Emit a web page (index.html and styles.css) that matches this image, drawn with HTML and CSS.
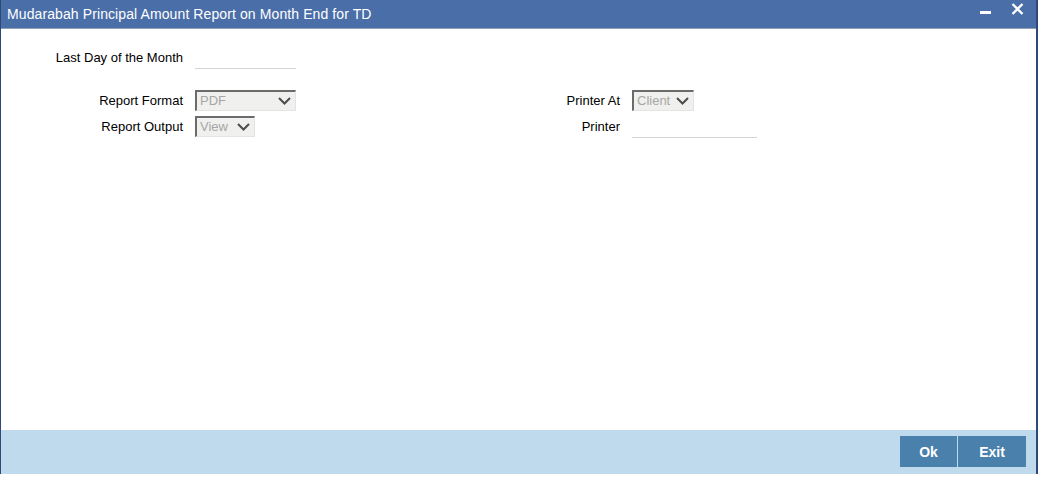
FILE: index.html
```html
<!DOCTYPE html>
<html>
<head>
<meta charset="utf-8">
<link rel="stylesheet" href="styles.css">
</head>
<body>
<div class="window">
  <div class="titlebar">
    <span class="title">Mudarabah Principal Amount Report on Month End for TD</span>
    <div class="controls">
      <svg class="min" width="11" height="4" viewBox="0 0 11 4"><rect x="0" y="0" width="11" height="3" fill="#fff"/></svg>
      <svg class="close" width="13" height="12" viewBox="0 0 13 12"><path d="M1.5 1 L11.5 11 M11.5 1 L1.5 11" stroke="#fff" stroke-width="2.4" fill="none"/></svg>
    </div>
  </div>
  <div class="body">
    <div class="row-single">
      <label class="lbl up">Last Day of the Month</label>
      <div class="line-input w101"></div>
    </div>
    <div class="grid">
      <label class="lbl">Report Format</label>
      <div class="select w101"><span>PDF</span><svg width="13" height="8" viewBox="0 0 13 8"><path d="M1 1 L6.5 6.5 L12 1" stroke="#4d4d4d" stroke-width="2" fill="none"/></svg></div>
      <label class="lbl">Printer At</label>
      <div class="select w62"><span>Client</span><svg width="13" height="8" viewBox="0 0 13 8"><path d="M1 1 L6.5 6.5 L12 1" stroke="#4d4d4d" stroke-width="2" fill="none"/></svg></div>
      <label class="lbl">Report Output</label>
      <div class="select w60"><span>View</span><svg width="13" height="8" viewBox="0 0 13 8"><path d="M1 1 L6.5 6.5 L12 1" stroke="#4d4d4d" stroke-width="2" fill="none"/></svg></div>
      <label class="lbl">Printer</label>
      <div class="line-input w125"></div>
    </div>
  </div>
  <div class="footer">
    <button class="btn ok">Ok</button>
    <button class="btn exit">Exit</button>
  </div>
</div>
</body>
</html>
```
FILE: styles.css
```css
* { box-sizing: border-box; }
html, body { margin: 0; padding: 0; background: #fff; }
body { font-family: "Liberation Sans", Arial, sans-serif; font-size: 13px; color: #000; }

.window {
  width: 1038px;
  height: 474px;
  display: flex;
  flex-direction: column;
  border-left: 1px solid #2c4a78;
  border-right: 2px solid #2c4a78;
}

.titlebar {
  height: 29px;
  flex: none;
  background: #4a6ea8;
  border-bottom: 1px solid #8fa0b4;
  display: flex;
  align-items: center;
  justify-content: space-between;
  padding: 0 12px 0 6px;
}
.title { color: #fff; font-size: 14px; letter-spacing: 0.1px; margin-top: -1px; }
.controls { display: flex; align-items: flex-start; gap: 20px; height: 100%; }
.controls .min { margin-top: 11px; }
.controls .close { margin-top: 3px; }

.body { flex: 1; padding-top: 18px; }

.row-single {
  display: grid;
  grid-template-columns: 182px 101px;
  column-gap: 12px;
  align-items: center;
  height: 22px;
}

.lbl { text-align: right; white-space: nowrap; }
.lbl.up { margin-top: -2px; }

.line-input { height: 22px; border-bottom: 1px solid #d4d4d4; }
.w101 { width: 101px; }
.w125 { width: 125px; }
.w62 { width: 62px; }
.w60 { width: 60px; }

.grid {
  margin-top: 21px;
  display: grid;
  grid-template-columns: 182px 101px 312px 125px;
  column-gap: 12px;
  row-gap: 5px;
  grid-auto-rows: 21px;
  align-items: center;
}

.select {
  height: 21px;
  background: #f0f0ee;
  border-top: 2px solid #6b6b6b;
  border-left: 2px solid #6b6b6b;
  border-right: 1px solid #e4e4e4;
  border-bottom: 1px solid #e4e4e4;
  display: flex;
  align-items: center;
  justify-content: space-between;
  padding: 0 4px 0 3px;
  color: #a6a6a6;
  font-size: 13px;
}
.select span { margin-top: -1px; }

.footer {
  height: 44px;
  flex: none;
  background: #bfdaed;
  display: flex;
  justify-content: flex-end;
  align-items: flex-start;
  padding: 6px 10px 0 0;
  gap: 1px;
}
.btn {
  height: 31px;
  border: none;
  background: #4a80ac;
  color: #fff;
  font-family: "Liberation Sans", Arial, sans-serif;
  font-size: 14px;
  font-weight: bold;
  padding: 0;
}
.btn.ok { width: 57px; }
.btn.exit { width: 68px; }
```
